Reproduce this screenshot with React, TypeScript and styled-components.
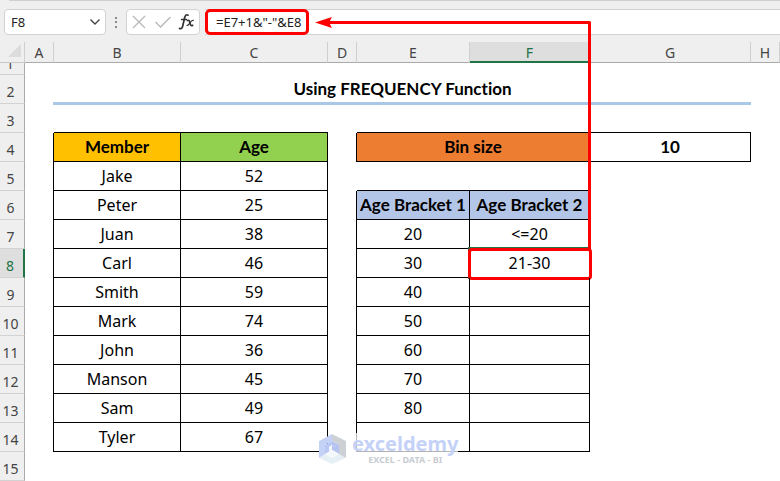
import React from "react";
import styled, { createGlobalStyle, css } from "styled-components";

const GlobalStyle = createGlobalStyle`
  *, *::before, *::after { box-sizing: border-box; }
  body { margin: 0; background: #fff; overflow: hidden; font-family: Lato, Carlito, sans-serif; color: #000; }
`;

const Page = styled.main`
  position: relative;
  background: #fff;
`;

const FormulaBar = styled.header`
  display: flex;
  align-items: center;
  height: 42px;
  padding: 2px 0 0 4px;
  background: #efefef;
`;

const Ribbon = styled.div`
  position: absolute;
  top: 0;
  left: 9px;
  right: 0;
  height: 1px;
  background: #d0d0d0;
`;

const Box = styled.div`
  display: flex;
  align-items: center;
  height: 26px;
  background: #fff;
  border: 1px solid #d2d2d2;
  border-radius: 4px;
`;

const NameBox = styled(Box)`
  width: 102px;
  padding: 0 4px 0 6px;
`;

const TextInput = styled.input`
  flex: 1;
  min-width: 0;
  height: 20px;
  padding: 0;
  border: 0;
  outline: 0;
  background: transparent;
  font: 13px "Noto Sans", sans-serif;
  color: #222;
`;

const IconButton = styled.button`
  display: flex;
  align-items: center;
  justify-content: center;
  height: 20px;
  padding: 0;
  border: 0;
  background: none;
`;

const Grip = styled.div`
  display: flex;
  justify-content: center;
  width: 20px;
`;

const Actions = styled(Box)`
  width: 74px;
  padding: 0 4px;
  justify-content: space-between;
`;

const Formula = styled.div`
  flex: 1;
  display: flex;
  height: 26px;
  margin-left: 5px;
  background: #fff;
  border: solid #d2d2d2;
  border-width: 1px 0;
`;

const FormulaFrame = styled.label`
  display: flex;
  align-items: center;
  width: 104px;
  height: 26px;
  margin-top: -1px;
  padding-left: 8px;
  border: 3px solid #f00;
  border-radius: 5px;
  background: #fff;
`;

const Sheet = styled.table`
  width: 100%;
  table-layout: fixed;
  border-collapse: separate;
  border-spacing: 0;
  font-size: 16px;
  line-height: 20px;
  text-align: center;
  font-variant-ligatures: none;
`;

const Col = styled.col<{ $w: number }>`
  width: ${(p) => p.$w}px;
`;

const Row = styled.tr<{ $h?: number }>`
  height: ${(p) => p.$h ?? 29}px;
`;

const ColHead = styled.th<{ $active?: boolean }>`
  padding: 2px 0 0;
  font: 14px/18px "Noto Sans", sans-serif;
  color: ${(p) => (p.$active ? "#217346" : "#444")};
  background: ${(p) => (p.$active ? "#dedede" : "#efefef")};
  border-bottom: 1px solid ${(p) => (p.$active ? "#217346" : "#ababab")};
  box-shadow: ${(p) => (p.$active ? "inset 0 -1px #217346" : "none")};
  border-right: 1px solid;
  border-right-color: #cfcfcf;
`;

const Corner = styled.td`
  padding: 0 3px 3px 0;
  background: #efefef;
  border-bottom: 1px solid #c8c8c8;
  border-right: 1px solid #cfcfcf;
  svg { display: block; margin-left: auto; }
`;

const RowHead = styled.th<{ $active?: boolean }>`
  padding: 5px 3px 0 0;
  font: 14px/20px "Noto Sans", sans-serif;
  color: ${(p) => (p.$active ? "#217346" : "#444")};
  background: ${(p) => (p.$active ? "#dedede" : "#efefef")};
  border-bottom: 1px solid #d2d2d2;
  border-right: ${(p) => (p.$active ? "2px solid #217346" : "1px solid #ababab")};
`;

const ClippedHead = styled(RowHead)`
  padding: 0 4px 0 0;
`;

const Clip = styled.div`
  display: flex;
  align-items: flex-end;
  justify-content: center;
  height: 11px;
  overflow: hidden;
`;

type CellProps = { $fill?: string; $right?: boolean; $bottom?: boolean; $bold?: boolean };

const boldText = css`
  font-family: Lato, Carlito, sans-serif;
  font-size: 17px;
  font-weight: 700;
`;

const Cell = styled.td<CellProps>`
  position: relative;
  padding: 0;
  white-space: nowrap;
  font-family: "Noto Sans", sans-serif;
  background: ${(p) => p.$fill ?? "transparent"};
  border: 0 solid #000;
  border-right-width: ${(p) => (p.$right ? 1 : 0)}px;
  border-bottom-width: ${(p) => (p.$bottom ? 1 : 0)}px;
  ${(p) => p.$bold && boldText}
`;

const TitleCell = styled(Cell)`
  ${boldText}
  padding-bottom: 1px;
  &::after {
    content: "";
    position: absolute;
    left: -1px;
    right: 0;
    bottom: -1px;
    height: 3px;
    background: #a9c8e8;
  }
`;

const SelectedCell = styled(Cell)`
  &::before {
    content: "";
    position: absolute;
    inset: -2px;
    border: 2px solid #217346;
  }
  &::after {
    content: "";
    position: absolute;
    inset: -1px -3px -3px -2px;
    border: 3px solid #f00;
    border-radius: 4px;
  }
`;

const Arrow = styled.svg`
  position: absolute;
  top: 0;
  left: 314px;
  pointer-events: none;
`;

const Watermark = styled.div`
  position: absolute;
  left: 318px;
  top: 433px;
  display: flex;
  align-items: center;
  gap: 5px;
`;

const Brand = styled.div`
  display: flex;
  flex-direction: column;
  align-items: center;
`;

const BrandName = styled.span`
  font: 700 20px/22px "Noto Sans", sans-serif;
  color: #c5d2f8;
  background: rgba(255, 255, 255, 0.7);
`;

const Tagline = styled.span`
  font: 700 9px/10px "Noto Sans", sans-serif;
  color: #c9cdd2;
`;

const columns = ["A", "B", "C", "D", "E", "F", "G", "H"];
const widths = [25, 29, 127, 147, 29, 113, 120, 161, 29];

const members: [string, number][] = [
  ["Jake", 52], ["Peter", 25], ["Juan", 38], ["Carl", 46], ["Smith", 59],
  ["Mark", 74], ["John", 36], ["Manson", 45], ["Sam", 49], ["Tyler", 67],
];

const brackets: Record<number, [string, string]> = {
  6: ["Age Bracket 1", "Age Bracket 2"],
  7: ["20", "<=20"],
  8: ["30", "21-30"],
  9: ["40", ""],
  10: ["50", ""],
  11: ["60", ""],
  12: ["70", ""],
  13: ["80", ""],
  14: ["", ""],
};

function MemberRow({ index }: { index: number }) {
  const [name, age] = members[index];
  const row = index + 5;
  const pair = brackets[row];
  const head = row === 6;
  const fill = head ? "#b4c6e7" : undefined;
  const Second = row === 8 ? SelectedCell : Cell;
  return (
    <Row>
      <RowHead scope="row" $active={row === 8}>{row}</RowHead>
      <Cell $right />
      <Cell $right $bottom>{name}</Cell>
      <Cell $right $bottom>{age}</Cell>
      <Cell $right={!!pair} />
      <Cell $right={!!pair} $bottom $fill={fill} $bold={head}>{pair?.[0]}</Cell>
      <Second $right={!!pair} $bottom $fill={fill} $bold={head}>{pair?.[1]}</Second>
      <Cell />
      <Cell />
    </Row>
  );
}

export default function App() {
  return (
    <Page>
      <GlobalStyle />
      <FormulaBar>
        <Ribbon />
        <NameBox>
          <TextInput aria-label="Name box" defaultValue="F8" />
          <IconButton aria-label="Show names">
            <svg width="12" height="8" viewBox="0 0 12 8" fill="none" stroke="#444" strokeWidth="1.4"><path d="M1.5 1.5 6 6l4.500-4.500" /></svg>
          </IconButton>
        </NameBox>
        <Grip>
          <svg width="4" height="14" viewBox="0 0 4 14" fill="#8a8a8a"><path d="M1 2h2v2H1zM1 6h2v2H1zM1 11h2v2H1z" /></svg>
        </Grip>
        <Actions>
          <IconButton aria-label="Cancel">
            <svg width="16" height="16" viewBox="0 0 16 16" fill="none" stroke="#b8b8b8" strokeWidth="1.300"><path d="m2 2 12 12M14 2 2 14" /></svg>
          </IconButton>
          <IconButton aria-label="Enter">
            <svg width="18" height="14" viewBox="0 0 18 14" fill="none" stroke="#b8b8b8" strokeWidth="1.300"><path d="m1.500 7 5 5L16.500 2" /></svg>
          </IconButton>
          <IconButton aria-label="Insert function">
            <svg width="17" height="18" viewBox="0 0 17 18" fill="none" stroke="#333" strokeLinecap="round">
              <path strokeWidth="1.700" d="M10 2.200C8.300 1 7.200 2.400 6.700 4.500L4.700 13c-.5 2.200-1.700 3.200-3.200 2.400" />
              <path strokeWidth="1.300" d="M3.500 6.500h5" />
              <path strokeWidth="1.700" d="M9.500 7.500c1.700-.8 2 .5 2.400 2.200.5 2.300 1 3.800 2.800 2.600" />
              <path strokeWidth="1.200" d="M15.300 7.400c-1.600-.4-2.600 1.300-3.500 2.700s-1.500 2.500-2.800 2.300" />
            </svg>
          </IconButton>
        </Actions>
        <Formula>
          <FormulaFrame>
            <TextInput aria-label="Formula" defaultValue={'=E7+1&"-"&E8'} />
          </FormulaFrame>
        </Formula>
      </FormulaBar>

      <Sheet>
        <colgroup>{widths.map((w, i) => <Col key={i} $w={w} />)}</colgroup>
        <thead>
          <Row $h={21}>
            <Corner>
              <svg width="13" height="13" viewBox="0 0 13 13"><path d="M13 0v13H0z" fill="#dcdcdc" /></svg>
            </Corner>
            {columns.map((c) => <ColHead key={c} scope="col" $active={c === "F"}>{c}</ColHead>)}
          </Row>
        </thead>
        <tbody>
          <Row $h={12}>
            <ClippedHead scope="row"><Clip>1</Clip></ClippedHead>
            <Cell colSpan={8} />
          </Row>
          <Row>
            <RowHead scope="row">2</RowHead>
            <Cell />
            <TitleCell colSpan={6}>Using FREQUENCY Function</TitleCell>
            <Cell />
          </Row>
          <Row>
            <RowHead scope="row">3</RowHead>
            <Cell />
            <Cell colSpan={2} $bottom />
            <Cell />
            <Cell colSpan={3} $bottom />
            <Cell />
          </Row>
          <Row>
            <RowHead scope="row">4</RowHead>
            <Cell $right />
            <Cell $right $bottom $bold $fill="#ffc000">Member</Cell>
            <Cell $right $bottom $bold $fill="#92d050">Age</Cell>
            <Cell $right />
            <Cell colSpan={2} $right $bottom $bold $fill="#ed7d31">Bin size</Cell>
            <Cell $right $bottom $bold>10</Cell>
            <Cell />
          </Row>
          {members.map((m, i) => <MemberRow key={m[0]} index={i} />)}
          <Row>
            <RowHead scope="row">15</RowHead>
            <Cell colSpan={8} />
          </Row>
        </tbody>
      </Sheet>

      <Arrow width="280" height="250" viewBox="0 0 280 250" aria-hidden="true">
        <path d="M14 22.500H275.500V250" fill="none" stroke="#f00" strokeWidth="3" strokeLinejoin="round" />
        <path d="M1 22.500 18 17 15 22.500 18 28z" fill="#f00" />
      </Arrow>

      <Watermark>
        <svg width="29" height="32" viewBox="0 0 29 32" aria-hidden="true">
          <path d="M14 1 1 8v17l6-3V12l7-4z" fill="#c5d2f8" />
          <path d="M14 1v7l7 4v10l7 3V8z" fill="#cdd1d6" />
          <path d="M1 25l13 6 14-6-7-4-7 4-7-4z" fill="#e6f0f4" />
          <path d="M14 8 7 12v9l4-2v-5l3-2z" fill="#b9c8f3" />
          <path d="M14 8v4l4 2v5l3 2v-9z" fill="#b4c3f0" />
          <path d="M11 14l3-2v6l-3 3z" fill="#f2f6fa" />
          <path d="M14 12l4 2v5l-4-2z" fill="#b4c3f0" />
          <path d="M7 21l7-4 7 4-7 4z" fill="#f4f8fb" />
        </svg>
        <Brand>
          <BrandName>exceldemy</BrandName>
          <Tagline>EXCEL - DATA - BI</Tagline>
        </Brand>
      </Watermark>
    </Page>
  );
}
